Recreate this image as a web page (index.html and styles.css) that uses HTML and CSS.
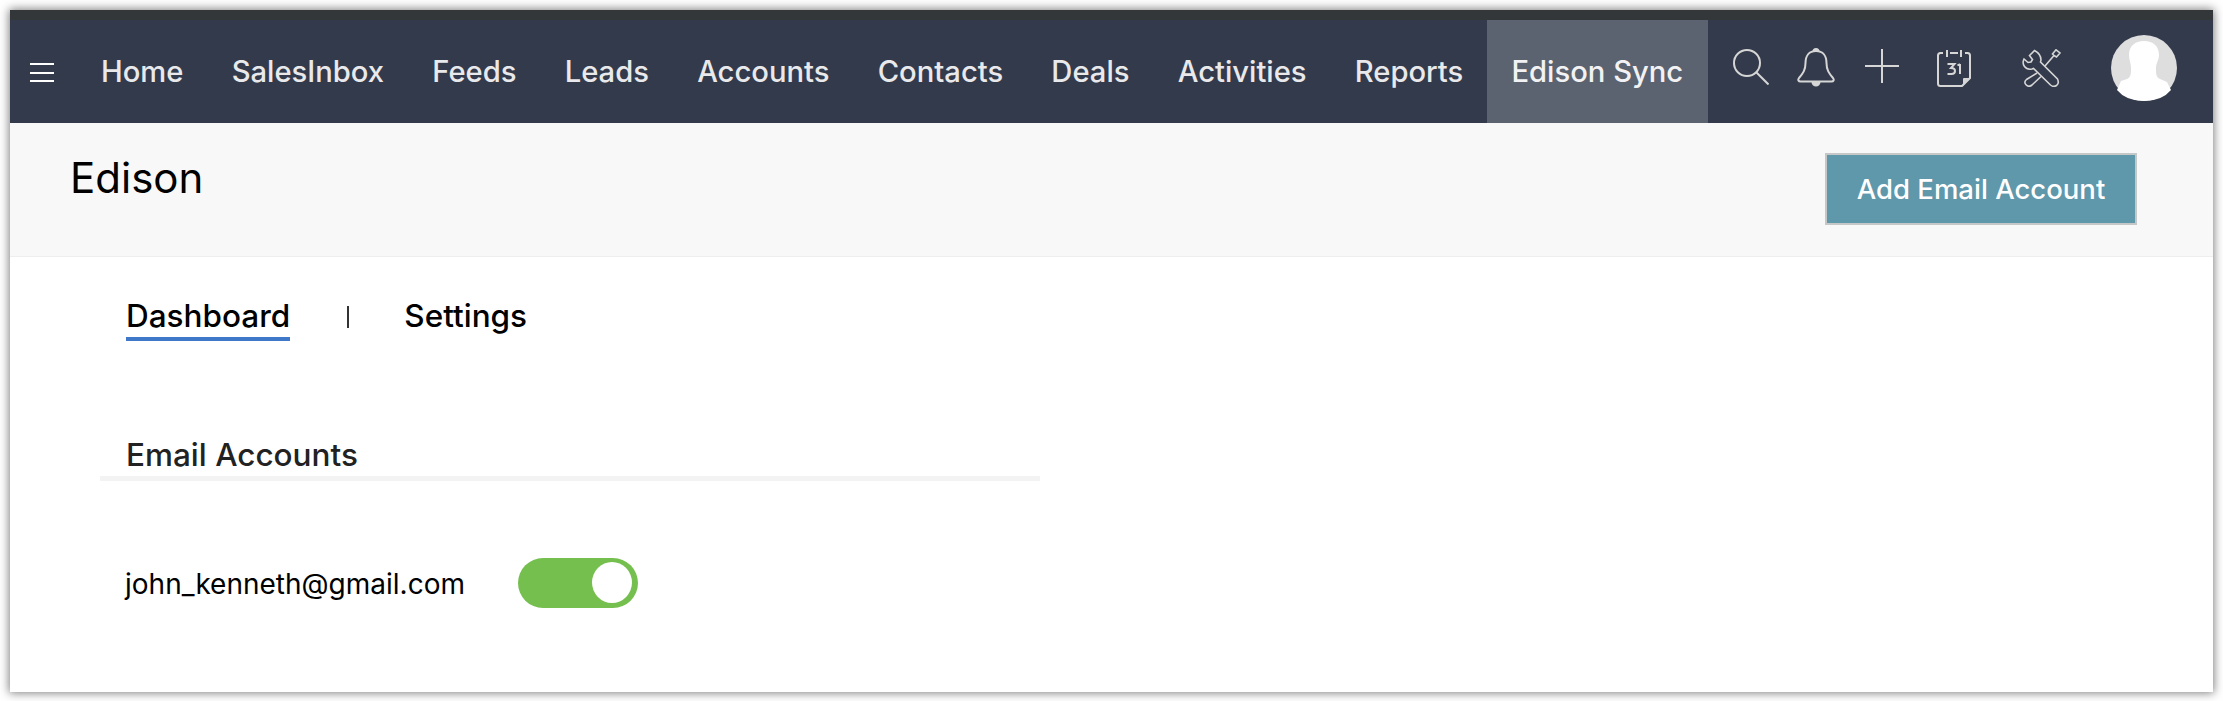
FILE: index.html
```html
<!DOCTYPE html>
<html lang="en">
<head>
<meta charset="utf-8">
<title>Edison</title>
<link rel="stylesheet" href="styles.css">
</head>
<body>
<div class="panel">
  <header class="topbar">
    <div class="menu"><span></span><span></span><span></span></div>
    <nav class="nav">
      <a class="nav-item">Home</a>
      <a class="nav-item">SalesInbox</a>
      <a class="nav-item">Feeds</a>
      <a class="nav-item">Leads</a>
      <a class="nav-item">Accounts</a>
      <a class="nav-item">Contacts</a>
      <a class="nav-item">Deals</a>
      <a class="nav-item">Activities</a>
      <a class="nav-item">Reports</a>
      <a class="nav-item active">Edison Sync</a>
    </nav>
    <div class="tools">
      <svg class="ic ic-search" viewBox="0 0 36 36"><circle cx="14" cy="14" r="13"/><path d="M23.500 23.500 35.500 35.500"/></svg>
      <svg class="ic ic-bell" viewBox="0 0 38 39"><path d="M19 3C12 3 8.500 8 8.500 15c0 7-2.500 10.500-6.500 15-1.500 2-.5 3.500 1.500 3.500h31c2 0 3-1.500 1.500-3.500-4-4.500-6.500-8-6.500-15C29.500 8 26 3 19 3z"/><path class="fill" d="M15.500 3.500a3.500 3.500 0 0 1 7 0zM14.500 34h9a4.500 4.500 0 0 1-9 0z"/></svg>
      <svg class="ic ic-plus" viewBox="0 0 34 34"><path d="M0 17h34M17 0v34"/></svg>
      <svg class="ic ic-cal" viewBox="0 0 34 37"><path d="M6 3H3.500Q1 3 1 5.500v28Q1 36 3.500 36H25L33 28V5.500Q33 3 30.500 3H28M13 3h8M10 0v7M24 0v7"/><path class="fill" d="M26 36v-7q0-1 1-1h6z"/><path d="M10.500 14h7l-3.500 4q4 0 4 3t-3.500 3h-4M23 14v10M20.500 15.500 23 14"/></svg>
      <svg class="ic ic-tools" viewBox="0 0 40 38"><path d="M13.500 1.500 8.500 6.500l3 4-1.500 2.500-3 .5-4-3.500Q1 14 3.500 17.500T11 20l1.500-.5 17 16.500q3 2.500 6 .5t1-6.500L19.500 13l.5-2Q20 5 13.500 1.500z"/><path d="M24 17 33 6.500M16 24 5.500 30.500Q2.500 33 5 35.800t6 .2l9-8.500"/><path d="M33 6.500 31.500 5 35 .8 39 4 35.500 8z"/></svg>
      <div class="avatar">
        <svg viewBox="0 0 66 66"><circle cx="33" cy="33" r="33" class="av-bg"/><path class="av-fg" d="M33 6c-9 0-15 5-15 14 0 5 2 8 2 13 0 6 0 9-4 11l-6 2-4 9Q15 66 33 66t27-11l-4-8-7-3c-4-2-4-5-4-11 0-5 3-8 3-13 0-9-6-14-15-14z"/></svg>
      </div>
    </div>
  </header>
  <section class="head">
    <h1 class="title">Edison</h1>
    <button class="add">Add Email Account</button>
  </section>
  <section class="body">
    <div class="tabs">
      <a class="tab current">Dashboard</a>
      <span class="sep"></span>
      <a class="tab">Settings</a>
    </div>
    <div class="sec">
      <h2 class="sec-title">Email Accounts</h2>
    </div>
    <div class="row">
      <span class="email">john_kenneth@gmail.com</span>
      <span class="toggle"><span class="knob"></span></span>
    </div>
  </section>
</div>
</body>
</html>
```
FILE: styles.css
```css
* { box-sizing: border-box; }
html, body { margin: 0; padding: 0; background: #fff; }
body { padding: 10px; height: 701px; overflow: hidden; font-family: Inter, "Liberation Sans", sans-serif; }
.panel { width: 2203px; height: 682px; background: #fff; box-shadow: 0 0 9px 1px rgba(0,0,0,.5); display: flex; flex-direction: column; overflow: hidden; }
.topbar { height: 113px; flex: none; background: #333a4b; border-top: 10px solid #33373a; display: flex; align-items: stretch; }
.menu { width: 91px; padding: 43px 0 0 20px; flex: none; }
.menu span { display: block; width: 24px; height: 2px; background: #fff; margin-bottom: 6.500px; }
.nav { display: flex; width: 1607px; flex: none; }
.nav-item { display: flex; align-items: center; padding: 0 24.100px; color: #e9e9ec; font-size: 29.200px; font-weight: 500; line-height: 1; height: 103px; white-space: nowrap; }
.nav-item:first-child { padding-left: 0; }
.nav-item.active { background: #5b6270; color: #f2f2f4; flex: 1; }
.tools { position: relative; flex: 1; }
.ic { position: absolute; fill: none; stroke: #d6d6d6; stroke-width: 2; }
.ic .fill { fill: #d6d6d6; stroke: none; }
.ic-search { left: 25px; top: 29px; width: 36px; height: 36px; }
.ic-bell { left: 89px; top: 28px; width: 38px; height: 39px; }
.ic-plus { left: 157px; top: 29px; width: 34px; height: 34px; }
.ic-cal { left: 229px; top: 30px; width: 34px; height: 37px; }
.ic-tools { left: 313px; top: 29px; width: 40px; height: 38px; stroke-width: 1.600; }
.avatar { position: absolute; left: 403px; top: 15px; width: 66px; height: 66px; }
.avatar svg { display: block; width: 66px; height: 66px; }
.av-bg { fill: #dedede; }
.av-fg { fill: #fff; }
.head { height: 134px; flex: none; background: #f8f8f8; border-bottom: 1px solid #eeeeee; display: flex; justify-content: space-between; align-items: flex-start; padding: 30px 76px 0 60px; }
.title { margin: 0; font-size: 42px; font-weight: 400; color: #000; line-height: 50px; }
.add { width: 312px; height: 72px; background: #5f97ab; border: 2px solid #c6c8c8; color: #fff; font-family: inherit; font-size: 27.500px; font-weight: 500; padding: 0; }
.body { flex: 1; padding: 37px 0 0 116px; }
.tabs { display: flex; align-items: flex-start; height: 141px; }
.tab { font-size: 31.500px; font-weight: 500; color: #000; line-height: 40px; padding-top: 2px; height: 47px; }
.tab.current { border-bottom: 4px solid #3f78c8; }
.sep { width: 2px; height: 22px; background: #333; margin: 12px 55px 0 57px; }
.sec { border-bottom: 5px solid #f3f3f3; margin-left: -26px; width: 940px; padding-left: 26px; height: 46px; }
.sec-title { margin: 0; font-size: 31.500px; font-weight: 500; color: #222; line-height: 40px; }
.row { display: flex; align-items: center; padding: 77px 0 0; margin-left: -1px; }
.email { font-size: 28px; color: #000; width: 393px; padding-top: 2px; }
.toggle { width: 120px; height: 50px; border-radius: 25px; background: #75bf4f; position: relative; display: block; }
.knob { position: absolute; right: 6px; top: 4px; width: 40px; height: 41px; border-radius: 50%; background: #fff; }
```
